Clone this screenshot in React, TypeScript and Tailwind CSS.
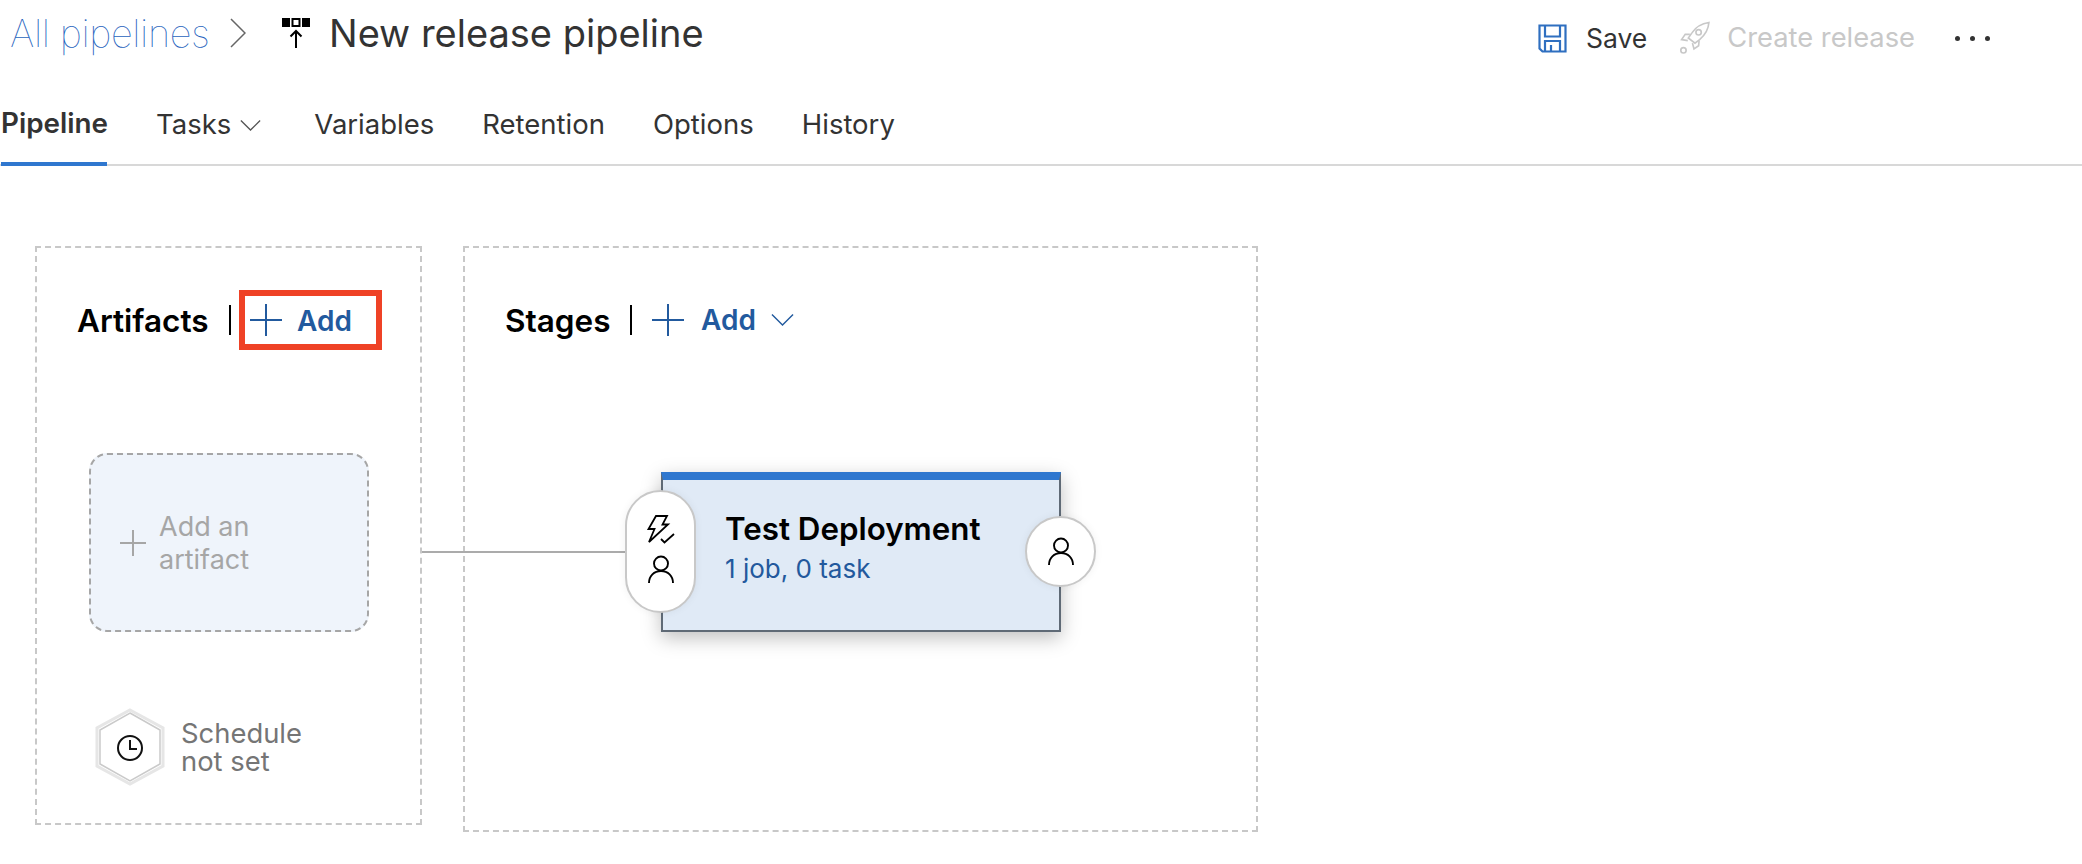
import React from "react";

const PlusIcon = ({ size, color }: { size: number; color: string }) => (
  <svg width={size} height={size} viewBox="0 0 32 32" fill="none" stroke={color} strokeWidth={32 / size * 2} className="shrink-0">
    <path d="M16 0v32M0 16h32" />
  </svg>
);

const ChevronDownIcon = ({ width, color }: { width: number; color: string }) => (
  <svg width={width} height={width / 2 + 2} viewBox="0 0 24 14" fill="none" stroke={color} strokeWidth="1.500" className="shrink-0">
    <path d="M1 1.500 12 12.500 23 1.500" />
  </svg>
);

const PipelineIcon = () => (
  <svg width="30" height="32" viewBox="0 0 30 32" className="shrink-0">
    <rect x="1" y="1" width="8" height="9" fill="#000" />
    <rect x="11.5" y="2" width="7" height="7" fill="none" stroke="#000" strokeWidth="2" />
    <rect x="21" y="1" width="8" height="9" fill="#000" />
    <path d="M15 31V14M9.500 19.500 15 14l5.500 5.500" fill="none" stroke="#000" strokeWidth="2" />
  </svg>
);

const SaveIcon = () => (
  <svg width="29" height="29" viewBox="0 0 29 29" fill="none" stroke="#2f6fc0" strokeWidth="2.200" className="shrink-0">
    <path d="M1.500 1.500h26v26H4.500l-3-3z" />
    <path d="M7 1.500v11h15v-11M7 27.500V17h15v10.500M13 27.500V21" />
  </svg>
);

const RocketIcon = () => (
  <svg width="34" height="34" viewBox="0 0 30 33" fill="none" stroke="#c8c8c8" strokeWidth="1.600" className="shrink-0">
    <path d="M28.500 1.500c-7 1-12.500 4-16.500 10l-3.500 5 6.500 5 4.500-3.500c5.500-4.500 8.500-9.500 9-16.500z" />
    <circle cx="18.500" cy="11" r="2.600" />
    <path d="M10 13H5.500L2 18l6 1M19 19l-.5 5-4.500 3-1.500-5.500" />
    <circle cx="3.800" cy="28.500" r="2.600" />
  </svg>
);

const PersonIcon = () => (
  <svg width="26" height="29" viewBox="0 0 26 29" fill="none" stroke="#000" strokeWidth="1.900" className="shrink-0">
    <circle cx="13" cy="8.500" r="7" />
    <path d="M1 28c0-7 5-12 12-12s12 5 12 12" />
  </svg>
);

const TriggerIcon = () => (
  <svg width="29" height="29" viewBox="0 0 29 29" fill="none" stroke="#000" strokeWidth="1.800" className="shrink-0">
    <path d="M10 1h11l-4.500 8.500H22L3 27l5.500-13H2.500z" strokeLinejoin="miter" />
    <path d="M15 24l3.500 3.500L28 19" />
  </svg>
);

const ScheduleIcon = () => (
  <svg width="70" height="78" viewBox="0 0 70 78" fill="none" className="shrink-0">
    <polygon points="35,2 68,20 68,58 35,76 2,58 2,20" stroke="#e6e6e6" strokeWidth="3" />
    <polygon points="35,5 65,22 65,56 35,73 5,56 5,22" stroke="#cacaca" strokeWidth="1.500" />
    <circle cx="35" cy="40" r="12" stroke="#111" strokeWidth="2" />
    <path d="M35 32v9h7" stroke="#111" strokeWidth="2" />
  </svg>
);

const tabClass = "text-[27.500px] leading-none text-[#333333]";

const App: React.FC = () => {
  return (
    <div className="w-[2082px] h-[864px] overflow-hidden bg-white font-['Inter',sans-serif]">
      {/* Title bar */}
      <div className="flex items-center h-[66px] pl-[10px]">
        <span className="w-[198px] whitespace-nowrap text-[38px] font-thin leading-none tracking-[-0.4px] text-[#1f63bd]">All pipelines</span>
        <svg width="16" height="30" viewBox="0 0 16 30" fill="none" stroke="#666666" strokeWidth="1.500" className="ml-[22px] shrink-0">
          <path d="M1 1l14 14L1 29" />
        </svg>
        <div className="ml-[35px]">
          <PipelineIcon />
        </div>
        <span className="ml-[18px] text-[38px] leading-none text-[#333333]">New release pipeline</span>
        <div className="ml-auto flex items-center pt-[10px] mr-[92px]">
          <SaveIcon />
          <span className="ml-[19px] text-[26.500px] leading-none text-[#333333]">Save</span>
          <div className="ml-[31px]">
            <RocketIcon />
          </div>
          <span className="ml-[15px] text-[27.300px] leading-none text-[#c8c8c8]">Create release</span>
          <div className="ml-[40px] flex gap-[10px]">
            <span className="w-[5px] h-[5px] rounded-full bg-[#333333]" />
            <span className="w-[5px] h-[5px] rounded-full bg-[#333333]" />
            <span className="w-[5px] h-[5px] rounded-full bg-[#333333]" />
          </div>
        </div>
      </div>

      {/* Tabs */}
      <div className="flex h-[100px] border-b-2 border-[#d8d8d8] pl-[1px]">
        <div className="flex items-center w-[106px] border-b-4 border-[#2f77cf] -mb-[2px] pt-[20px]">
          <span className="whitespace-nowrap text-[27.800px] leading-none font-semibold text-[#333333]">Pipeline</span>
        </div>
        <div className="flex items-center pt-[20px] ml-[49px]">
          <span className={tabClass}>Tasks</span>
          <div className="ml-[9px]">
            <ChevronDownIcon width={21} color="#555555" />
          </div>
        </div>
        <div className="flex items-center pt-[20px] ml-[53px] gap-[48px]">
          <span className={tabClass}>Variables</span>
          <span className={tabClass}>Retention</span>
          <span className={tabClass}>Options</span>
          <span className={tabClass}>History</span>
        </div>
      </div>

      <div className="relative flex items-start gap-[41px] pl-[35px] pt-[80px]">
        {/* Link between the artifact panel and the first stage */}
        <div className="absolute left-[422px] top-[385px] w-[204px] h-[2px] bg-[#ababab]" />

        {/* Artifacts */}
        <div className="w-[387px] h-[579px] border-2 border-dashed border-[#c8c8c8] pt-[42px] pl-[40px]">
          <div className="flex items-center h-[60px]">
            <span className="w-[131px] pt-[2px] text-[31.500px] leading-none font-semibold text-black">Artifacts</span>
            <span className="ml-[21px] w-[2px] h-[30px] bg-black" />
            <div className="ml-[8px] flex items-center w-[143px] h-[60px] border-[6px] border-[#ef4226] pl-[5px]">
              <PlusIcon size={32} color="#225a9e" />
              <span className="ml-[15px] pt-[1px] text-[28px] leading-none font-semibold text-[#225a9e]">Add</span>
            </div>
          </div>
          <div className="mt-[103px] ml-[12px] flex items-center w-[280px] h-[179px] rounded-[18px] border-2 border-dashed border-[#a6a6a6] bg-[#eff4fb] pl-[29px]">
            <PlusIcon size={26} color="#a6a6a6" />
            <span className="ml-[13px] text-[27px] leading-[33px] text-[#a6a6a6]">
              Add an
              <br />
              artifact
            </span>
          </div>
          <div className="mt-[76px] ml-[18px] flex items-center">
            <ScheduleIcon />
            <span className="ml-[16px] text-[27.400px] leading-[28.500px] text-[#757575]">
              Schedule
              <br />
              not set
            </span>
          </div>
        </div>

        {/* Stages */}
        <div className="w-[795px] h-[586px] border-2 border-dashed border-[#c8c8c8] pt-[42px] pl-[40px]">
          <div className="flex items-center h-[60px]">
            <span className="w-[104px] pt-[1px] text-[31.500px] leading-none font-semibold text-black">Stages</span>
            <span className="ml-[21px] w-[2px] h-[30px] bg-black" />
            <div className="ml-[20px]">
              <PlusIcon size={32} color="#225a9e" />
            </div>
            <span className="ml-[17px] text-[28px] leading-none font-semibold text-[#225a9e]">Add</span>
            <div className="ml-[15px]">
              <ChevronDownIcon width={23} color="#225a9e" />
            </div>
          </div>
          <div className="relative mt-[122px] ml-[156px] w-[400px] h-[160px] border-2 border-t-[8px] border-[#5f6a76] border-t-[#2f77cf] bg-[#e0eaf6] shadow-[0_6px_18px_rgba(0,0,0,0.25)] pl-[62px] pt-[31px]">
            <div className="text-[31.300px] leading-[36px] font-semibold text-black">Test Deployment</div>
            <div className="mt-[7px] text-[26px] leading-[30px] text-[#23599d]">1 job, 0 task</div>

            {/* Pre-deployment conditions */}
            <div className="absolute -left-[38px] top-[10px] w-[71px] h-[123px] rounded-full border-2 border-[#c8c8c8] bg-white shadow-[0_0_8px_rgba(0,0,0,0.06)] flex flex-col items-center justify-center gap-[11px] pb-[4px]">
              <TriggerIcon />
              <PersonIcon />
            </div>
            {/* Post-deployment conditions */}
            <div className="absolute -right-[37px] top-[36px] w-[71px] h-[71px] rounded-full border-2 border-[#c8c8c8] bg-white shadow-[0_0_8px_rgba(0,0,0,0.06)] flex items-center justify-center">
              <PersonIcon />
            </div>
          </div>
        </div>
      </div>
    </div>
  );
};

export default App;
